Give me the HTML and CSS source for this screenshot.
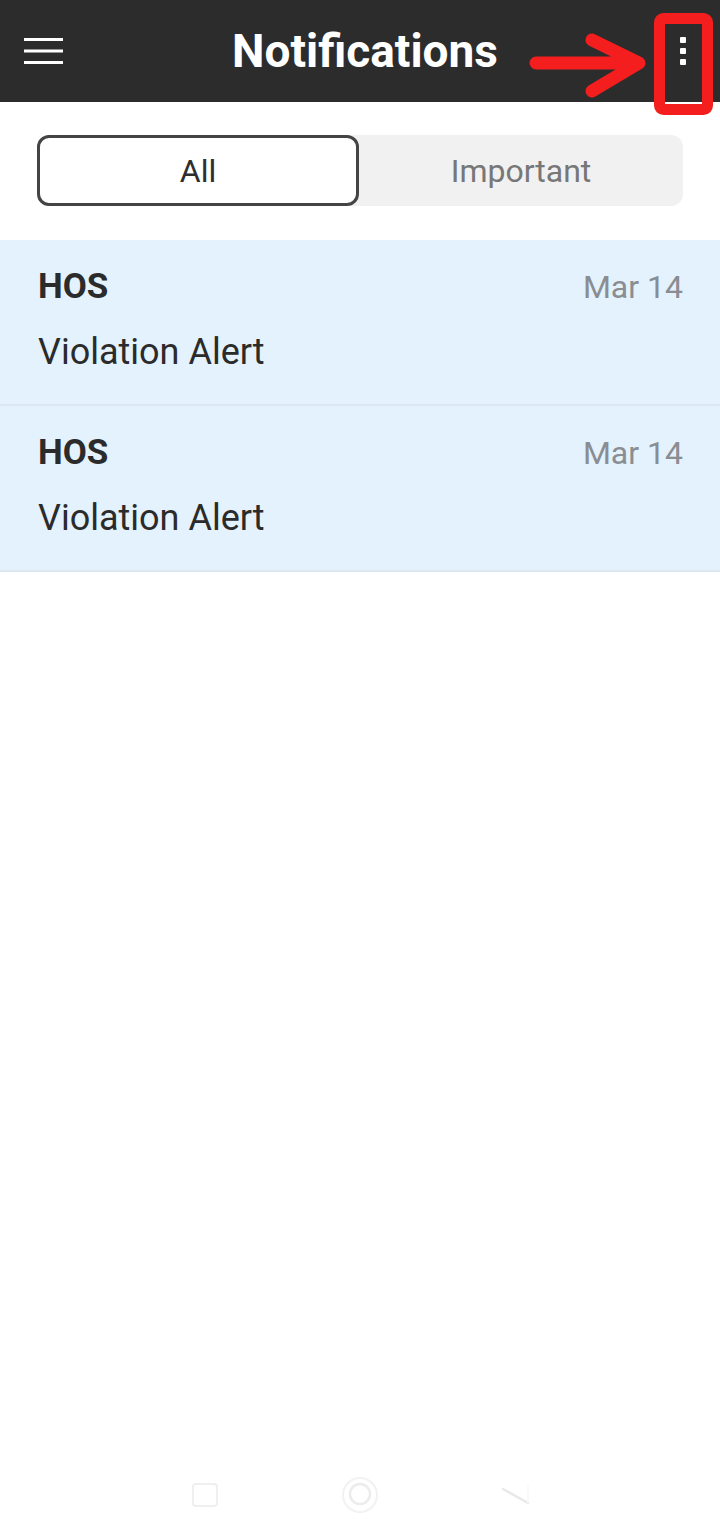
FILE: index.html
```html
<!DOCTYPE html>
<html lang="en">
<head>
    <meta charset="UTF-8">
    <meta name="viewport" content="width=device-width, initial-scale=1.0">
    <title>Notifications</title>
    <link rel="stylesheet" href="styles.css">
</head>
<body>
    <div class="screen">
        <header class="top-bar">
            <svg class="menu-icon" width="39" height="26" viewBox="0 0 39 26">
                <rect x="0" y="0" width="39" height="3" fill="#fff"/>
                <rect x="0" y="11.5" width="39" height="3" fill="#fff"/>
                <rect x="0" y="23" width="39" height="3" fill="#fff"/>
            </svg>
            <h1 class="title">Notifications</h1>
            <div class="more-icon">
                <span></span>
                <span></span>
                <span></span>
            </div>

            <!-- red annotation drawn over the bar -->
            <svg class="callout" width="720" height="120" viewBox="0 0 720 120">
                <rect x="659.5" y="18.5" width="48" height="91" rx="4" fill="none" stroke="#f41e1e" stroke-width="11"/>
                <path d="M536 63 L638 63 M592 40 L639 63 L592 91" fill="none" stroke="#f41e1e" stroke-width="13" stroke-linecap="round" stroke-linejoin="round"/>
            </svg>
        </header>

        <div class="tabs">
            <div class="tab active">All</div>
            <div class="tab">Important</div>
        </div>

        <ul class="notice-list">
            <li class="notice">
                <div class="notice-head">
                    <span class="notice-type">HOS</span>
                    <span class="notice-date">Mar 14</span>
                </div>
                <div class="notice-text">Violation Alert</div>
            </li>
            <li class="notice">
                <div class="notice-head">
                    <span class="notice-type">HOS</span>
                    <span class="notice-date">Mar 14</span>
                </div>
                <div class="notice-text">Violation Alert</div>
            </li>
        </ul>

        <nav class="sys-nav">
            <svg width="40" height="40" viewBox="0 0 40 40">
                <rect x="8" y="8" width="24" height="22" rx="3" fill="none" stroke="#efefef" stroke-width="2"/>
            </svg>
            <svg width="40" height="40" viewBox="0 0 40 40">
                <circle cx="20" cy="19" r="17" fill="none" stroke="#f2f2f2" stroke-width="2"/>
                <circle cx="20" cy="18" r="10" fill="none" stroke="#ececec" stroke-width="2.5"/>
            </svg>
            <svg width="40" height="40" viewBox="0 0 40 40">
                <path d="M8 13 L33 27" fill="none" stroke="#e9e9e9" stroke-width="2.5" stroke-linecap="round"/>
                <path d="M33 10 L33 27" fill="none" stroke="#f7f7f7" stroke-width="1.5"/>
            </svg>
        </nav>
    </div>
</body>
</html>
```

FILE: styles.css
```css
* {
    box-sizing: border-box;
}

body {
    margin: 0;
    font-family: Roboto, "Liberation Sans", Arial, sans-serif;
    background-color: #fff;
}

.screen {
    min-height: 1538px;
    display: flex;
    flex-direction: column;
}

.top-bar {
    position: relative;
    height: 102px;
    padding: 0 34px 0 24px;
    display: flex;
    align-items: center;
    background-color: #2c2c2c;
}

.menu-icon {
    display: block;
}

.title {
    flex: 1;
    margin: 0;
    padding-right: 13px;
    text-align: center;
    color: #fff;
    font-size: 46px;
    line-height: 46px;
    font-weight: bold;
}

.more-icon {
    width: 6px;
    display: flex;
    flex-direction: column;
    gap: 5px;
}

.more-icon span {
    width: 6px;
    height: 6px;
    border-radius: 1px;
    background-color: #fff;
}

.callout {
    position: absolute;
    left: 0;
    top: 0;
    overflow: visible;
}

.tabs {
    margin: 33px 37px 0;
    height: 71px;
    display: flex;
    background-color: #f1f1f1;
    border-radius: 12px;
}

.tab {
    flex: 1;
    display: flex;
    align-items: center;
    justify-content: center;
    font-size: 32px;
    color: #777;
}

.tab.active {
    flex: 0 0 322px;
    background-color: #fff;
    border: 3px solid #444;
    border-radius: 12px;
    color: #2e2e2e;
}

.notice-list {
    list-style: none;
    margin: 34px 0 0;
    padding: 0;
}

.notice {
    height: 166px;
    padding: 27px 37px 0 38px;
    background-color: #e3f2fd;
    border-bottom: 2px solid #dce7ef;
}

.notice-head {
    display: flex;
    justify-content: space-between;
    align-items: baseline;
    line-height: 40px;
}

.notice-type {
    font-size: 35px;
    font-weight: bold;
    color: #2b2b2b;
}

.notice-date {
    font-size: 32px;
    color: #8a8d91;
}

.notice-text {
    margin-top: 23px;
    font-size: 36px;
    line-height: 44px;
    color: #2b2b2b;
}

.sys-nav {
    margin-top: auto;
    height: 82px;
    display: flex;
    justify-content: center;
    align-items: flex-start;
    gap: 115px;
    padding-top: 20px;
}

.sys-nav svg {
    display: block;
}
```
